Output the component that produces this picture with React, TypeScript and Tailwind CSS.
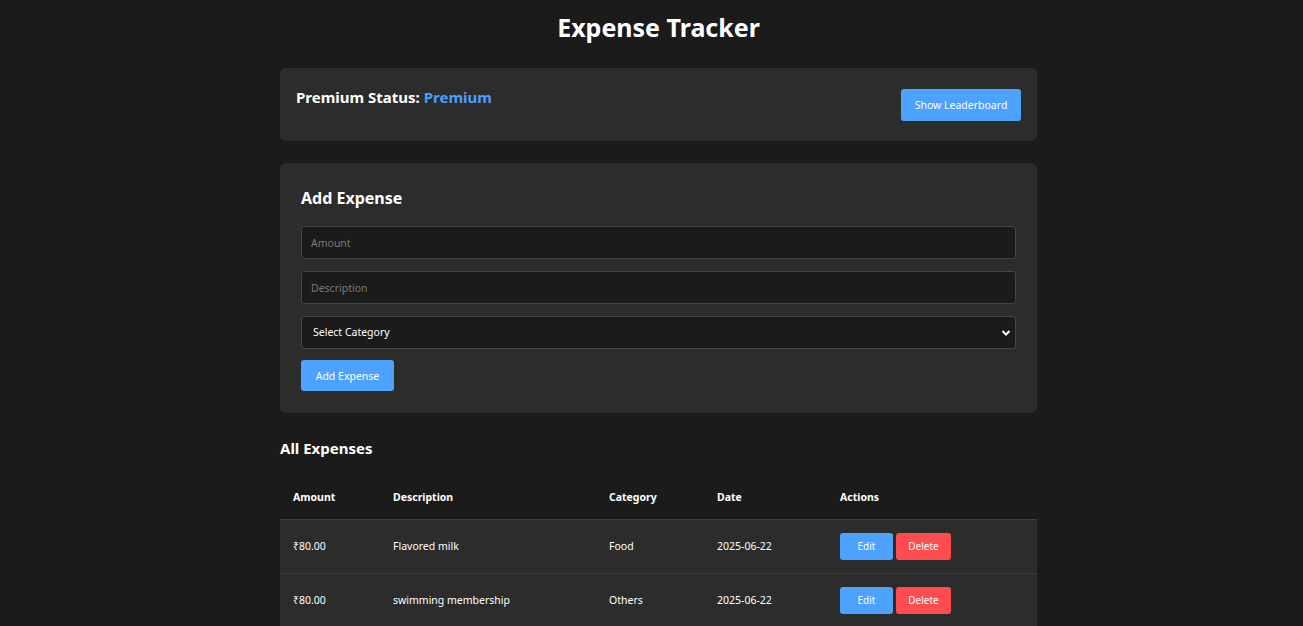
import React from 'react';

type Expense = { id: number; amount: number; description: string; category: string; date: string };

const expenses: Expense[] = [
    { id: 1, amount: 80, description: 'Flavored milk', category: 'Food', date: '2025-06-22' },
    { id: 2, amount: 80, description: 'swimming membership', category: 'Others', date: '2025-06-22' },
];

const App: React.FC = () => {
    return (
        <div className="min-h-screen bg-[#1b1b1b] text-white pl-[14px] pt-[12px] font-['Noto_Sans',sans-serif]">
            <div className="w-[757px] mx-auto">
                <h1 className="text-[25px] font-bold text-center leading-[30px]">Expense Tracker</h1>

                {/* Premium card */}
                <div className="mt-[26px] bg-[#2c2c2c] rounded-md h-[73px] px-4 pt-[19px] flex items-start justify-between">
                    <h3 className="text-[15px] font-bold leading-[20px]">
                        Premium Status: <span className="text-[#4a9eff]">Premium</span>
                    </h3>
                    <button className="mt-[2px] w-[120px] h-[32px] pt-[2px] bg-[#4da1ff] rounded-[3px] text-[10.5px] text-white">
                        Show Leaderboard
                    </button>
                </div>

                {/* Add expense */}
                <div className="mt-[22px] bg-[#2c2c2c] rounded-md px-[21px] pt-[24px] pb-[22px]">
                    <h2 className="text-[16px] font-bold leading-[22px]">Add Expense</h2>
                    <div className="mt-[17px] flex flex-col gap-[12px]">
                        <input
                            placeholder="Amount"
                            className="h-[33px] bg-[#1b1b1b] border border-[#454545] rounded-[3px] px-[9px] pt-[1px] text-[10.5px] text-white placeholder:text-[#7a7a7a] outline-none"
                        />
                        <input
                            placeholder="Description"
                            className="h-[33px] bg-[#1b1b1b] border border-[#454545] rounded-[3px] px-[9px] pt-[1px] text-[10.5px] text-white placeholder:text-[#7a7a7a] outline-none"
                        />
                        <div className="relative">
                            <select className="w-full h-[33px] appearance-none bg-[#1b1b1b] border border-[#454545] rounded-[3px] px-[11px] pt-[1px] text-[10.5px] text-white outline-none">
                                <option>Select Category</option>
                                <option>Food</option>
                                <option>Others</option>
                            </select>
                            <svg className="absolute right-[5px] top-[13px] w-[10px] h-[8px] pointer-events-none" viewBox="0 0 10 8">
                                <path d="M1.5 2 L5 5.5 L8.5 2" stroke="white" strokeWidth="2" fill="none" />
                            </svg>
                        </div>
                    </div>
                    <button className="mt-[11px] w-[93px] h-[31px] pt-[2px] bg-[#4da1ff] rounded-[3px] text-[10.5px] text-white">
                        Add Expense
                    </button>
                </div>

                <h2 className="mt-[25px] text-[15px] font-bold leading-[20px]">All Expenses</h2>

                <table className="mt-[17px] w-full text-[10.5px] border-collapse">
                    <thead>
                        <tr className="h-[44px] border-b border-[#3d3d3d]">
                            <th className="text-left font-bold pl-[13px] pt-[2px] w-[100px]">Amount</th>
                            <th className="text-left font-bold pl-[13px] pt-[2px] w-[216px]">Description</th>
                            <th className="text-left font-bold pl-[13px] pt-[2px] w-[108px]">Category</th>
                            <th className="text-left font-bold pl-[13px] pt-[2px] w-[123px]">Date</th>
                            <th className="text-left font-bold pl-[13px] pt-[2px]">Actions</th>
                        </tr>
                    </thead>
                    <tbody>
                        {expenses.map(e => (
                            <tr key={e.id} className="h-[54px] bg-[#2c2c2c] border-b border-[#3d3d3d]">
                                <td className="pl-[13px] pt-[2px]">₹{e.amount.toFixed(2)}</td>
                                <td className="pl-[13px] pt-[2px]">{e.description}</td>
                                <td className="pl-[13px] pt-[2px]">{e.category}</td>
                                <td className="pl-[13px] pt-[2px]">{e.date}</td>
                                <td className="pl-[13px]">
                                    <div className="flex gap-[3px]">
                                        <button className="w-[53px] h-[27px] pt-[1px] bg-[#4da1ff] rounded-[3px] text-[10px] text-white">Edit</button>
                                        <button className="w-[55px] h-[27px] pt-[1px] bg-[#ff4d4f] rounded-[3px] text-[10px] text-white">Delete</button>
                                    </div>
                                </td>
                            </tr>
                        ))}
                    </tbody>
                </table>
            </div>
        </div>
    );
};

export default App;
